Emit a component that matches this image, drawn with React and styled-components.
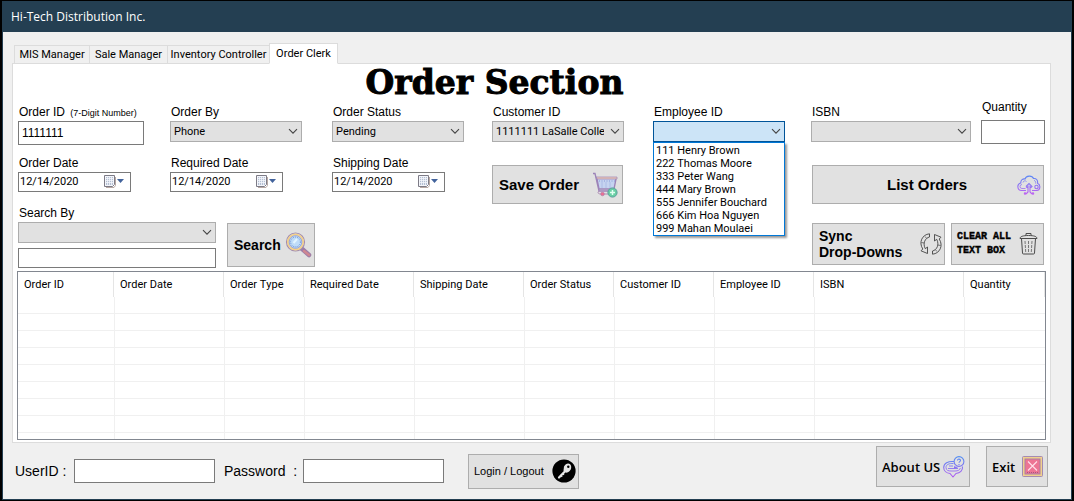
import React from "react";
import styled, { createGlobalStyle, css } from "styled-components";

const Global = createGlobalStyle`
  *, *::before, *::after { box-sizing: border-box; }
  body { margin: 0; background: #000; color: #000; font: 11px/14px Roboto, "Liberation Sans", Arial, sans-serif; font-kerning: none; }
  button, input, select { font: inherit; font-kerning: inherit; color: inherit; margin: 0; border-radius: 0; }
`;

const wide = `"Liberation Sans", Arial, sans-serif`;

const Window = styled.div`
  margin: 1px 2px;
  border: 1px solid #243f52;
  border-top: 0;
  background: #f0f0f0;
`;

const TitleBar = styled.header`
  height: 31px;
  padding-left: 8px;
  background: #243f52;
  color: #fff;
  font: 12px/31px "Open Sans", "Noto Sans", sans-serif;
`;

const Tabs = styled.nav`
  display: flex;
  align-items: flex-end;
  height: 32px;
  margin-bottom: -1px;
  padding-left: 11px;
`;

const Tab = styled.button`
  position: relative;
  flex: none;
  width: ${(p) => p.$width}px;
  height: 19px;
  padding: 0;
  border: 1px solid #dcdcdc;
  border-right-width: 0;
  background: #f0f0f0;
  text-align: center;
  white-space: nowrap;
  ${(p) =>
    p.$active &&
    css`
      height: 21px;
      border-right-width: 1px;
      border-bottom-color: #fff;
      background: #fff;
    `}
`;

const Panel = styled.main`
  margin: 0 20px 0 9px;
  padding: 0 4px 2px;
  border: 1px solid #dcdcdc;
  background: #fff;
`;

const Heading = styled.h1`
  margin: 0;
  padding: 4px 74px 0 0;
  height: 34px;
  font: bold 33px/30px "DejaVu Serif", serif;
  text-align: center;
  -webkit-text-stroke: 1px #000;
`;

const FormRow = styled.div`
  display: grid;
  grid-template-columns: 152fr 162fr 160fr 161fr 158fr 170fr 64fr;
  height: ${(p) => p.$height}px;
  margin: 0 1px 0 1px;
`;

const Field = styled.div`
  position: relative;
  display: flex;
  flex-direction: column;
  min-width: 0;
  margin-right: ${(p) => p.$after || 0}px;
  padding-top: ${(p) => (p.$raised ? 0 : p.$top || 0)}px;
  gap: ${(p) => (p.$raised ? 4 : 0)}px;
`;

const Label = styled.label`
  height: 18px;
  padding-left: 1px;
  font: 12px/18px ${wide};
  white-space: nowrap;
`;

const Hint = styled.span`
  margin-left: 2px;
  font-size: 9px;
`;

const TextBox = styled.input`
  width: 100%;
  height: ${(p) => p.$height || 24}px;
  padding: 0 3px;
  border: 1px solid #7a7a7a;
  background: #fff;
  font: 12px ${wide};
  outline: 0;
`;

const SelectWrap = styled.div`
  position: relative;
  svg {
    position: absolute;
    right: 4px;
    top: 7px;
    pointer-events: none;
  }
`;

const SelectBox = styled.select`
  appearance: none;
  display: block;
  width: 100%;
  height: 21px;
  padding: 0 19px 0 3px;
  border: 1px solid ${(p) => (p.$open ? "#005499" : "#adadad")};
  background: ${(p) => (p.$open ? "#cce4f7" : "#e1e1e1")};
  outline: 0;
`;

const Options = styled.ul`
  position: absolute;
  z-index: 2;
  top: 100%;
  left: 0;
  right: 0;
  margin: 0;
  padding: 1px 2px 0;
  border: 1px solid #0078d7;
  background: #fff;
  box-shadow: 2px 2px 2px rgba(0, 0, 0, 0.4);
  list-style: none;
  line-height: 13px;
  white-space: nowrap;
`;

const DateBox = styled.div`
  display: flex;
  align-items: center;
  width: 113px;
  height: 20px;
  padding: 0 5px 0 1px;
  border: 1px solid #7a7a7a;
  background: #fff;
`;

const DateInput = styled.input`
  flex: 1;
  min-width: 0;
  padding: 0;
  border: 0;
  outline: 0;
  background: none;
`;

const PickerButton = styled.button`
  display: flex;
  padding: 0;
  border: 0;
  background: none;
`;

const Button = styled.button`
  display: flex;
  align-items: center;
  justify-content: space-between;
  flex: none;
  width: ${(p) => (p.$width ? p.$width + "px" : "auto")};
  height: ${(p) => p.$height}px;
  padding: 0 2px 0 6px;
  border: 1px solid #adadad;
  background: #e1e1e1;
  font: bold 14px/16px ${wide};
  text-align: left;
  white-space: nowrap;
  svg { flex: none; }
`;

const SaveButton = styled(Button)`
  align-self: end;
  margin-right: 30px;
  font-size: 15px;
`;

const ListButton = styled(Button)`
  grid-column: 6 / 8;
  align-self: end;
  margin-left: 1px;
  margin-right: 1px;
  font-size: 15px;
`;

const Centered = styled.span`
  flex: 1;
  padding-left: 18px;
  text-align: center;
`;

const ClearButton = styled(Button)`
  padding: 0 5px;
  font: bold 10px/14px "Liberation Mono", monospace;
  -webkit-text-stroke: 0.4px #000;
`;

const LoginButton = styled(Button)`
  margin-left: 24px;
  padding-left: 5px;
  font-size: 11px;
  font-weight: normal;
`;

const UiButton = styled(Button)`
  padding: 0 4px 0 5px;
  font: 600 13px/18px "Open Sans", "Noto Sans", sans-serif;
`;

const SearchRow = styled.div`
  display: flex;
  align-items: flex-start;
  height: 67px;
  margin: 0 2px 0 1px;
`;

const SearchFields = styled.div`
  display: flex;
  flex-direction: column;
  width: 198px;
  margin-right: 11px;
`;

const SearchText = styled(TextBox)`
  margin-top: 5px;
`;

const Actions = styled.div`
  display: flex;
  gap: ${(p) => p.$gap}px;
  margin-left: auto;
  padding-top: ${(p) => p.$top}px;
`;

const SearchAction = styled.div`
  padding-top: 19px;
`;

const Grid = styled.div`
  height: 169px;
  overflow: hidden;
  border: 1px solid #828790;
`;

const Table = styled.table`
  width: 100%;
  table-layout: fixed;
  border-collapse: separate;
  border-spacing: 0;
  th {
    height: 25px;
    padding: 0 0 0 6px;
    border-right: 1px solid #e5e5e5;
    font-weight: normal;
    text-align: left;
    white-space: nowrap;
  }
  td {
    height: 17px;
    padding: 0;
    border-bottom: 1px solid #f0f0f0;
  }
  td + td { border-left: 1px solid #f0f0f0; }
`;

const Footer = styled.footer`
  display: flex;
  align-items: center;
  height: 56px;
  padding: 0 23px 0 12px;
`;

const LoginLabel = styled.label`
  width: ${(p) => p.$width}px;
  font: 14px/18px ${wide};
  white-space: pre;
`;

const LoginInput = styled(TextBox)`
  width: 141px;
  margin-right: ${(p) => p.$after || 0}px;
`;

const FooterActions = styled(Actions)`
  align-self: flex-start;
`;

const Chevron = () => (
  <svg width="10" height="7" viewBox="0 0 10 7" fill="none" stroke="#444" strokeWidth="1.1">
    <path d="M1 1.2 5 5.2 9 1.2" />
  </svg>
);

const CalendarIcon = () => (
  <svg width="21" height="14" viewBox="0 0 21 14">
    <path d="M2 12.500h8l1.500-2V2" stroke="#b8a9a4" fill="none" />
    <path d="M.5.5h10v9l-2 2h-8z" fill="#f4f6fb" stroke="#7d7b86" />
    <path d="M2 2h7v8H2z" fill="#b4bfd3" />
    <path d="M2 3.500h7M2 5.500h7M2 7.500h7M3.500 2v8M5.500 2v8M7.500 2v8" stroke="#f4f6fb" strokeWidth=".8" />
    <path d="M13 4h7l-3.500 4z" fill="#42639c" />
  </svg>
);

const CartIcon = () => (
  <svg width="28" height="26" viewBox="0 0 28 26" fill="none">
    <path d="M5 7h19l-2 9.500H7z" fill="#c5d3f0" />
    <path d="M4 5h21v2H5z" fill="#f0ccb4" stroke="#a48bb8" strokeWidth=".8" />
    <path d="M1 1.500h2L7 19h14M5 7l2 10h15l2-10" stroke="#9c83b8" strokeWidth="1.3" />
    <path d="M7 9h16" stroke="#8597d6" strokeDasharray="1 1.500" />
    <path d="M10 10v6M14 10v6M18 10v6" stroke="#adbce6" />
    <path d="M7 19c-2 2-.5 3 2 3h10" stroke="#ae8ab4" />
    <circle cx="10.500" cy="22" r="1.800" fill="#ee6f91" stroke="#a879a8" strokeWidth=".6" />
    <circle cx="20.500" cy="20.500" r="4.600" fill="#69cfa4" stroke="#5b9e9b" />
    <path d="M20.500 18v5M18 20.500h5" stroke="#e1fff2" strokeWidth="1.500" />
  </svg>
);

const CloudIcon = () => (
  <svg width="24" height="20" viewBox="0 0 24 20" fill="none" stroke="url(#cloudInk)" strokeWidth="1.100">
    <defs>
      <linearGradient id="cloudInk" x1="0" y1="0" x2="0" y2="20" gradientUnits="userSpaceOnUse">
        <stop stopColor="#5589f5" />
        <stop offset="1" stopColor="#c260f1" />
      </linearGradient>
    </defs>
    <path d="M9 15.500H4.500a3.800 3.800 0 0 1-.7-7.500C3.500 5 6 3.500 8 4c1-3.500 7-4 8.500-.5 3-.3 4.600 2 4 4.700 3.500 1.400 3 7-.7 7.300H15" />
    <path d="M8.500 13.500H5a2 2 0 0 1 0-4M6 7.500c.5-2 2.500-2 3.500-1M17 5.500c1.500.3 2 1.500 1.500 3" strokeWidth=".8" />
    <path d="M9 11.500 12 8.500l3 3-1 1-1-1V17l2 2M9 11.500l1 1 1-1V17l-2 2" />
    <circle cx="19.500" cy="12" r="1.700" />
    <circle cx="8" cy="18.500" r=".7" />
    <circle cx="16" cy="18.500" r=".7" />
  </svg>
);

const SearchIcon = () => (
  <svg width="27" height="26" viewBox="0 0 27 26" fill="none">
    <path d="m16 16 8 7" stroke="#9c7da8" strokeWidth="4.500" strokeLinecap="round" />
    <path d="m19 19 5 4" stroke="#cf8791" strokeWidth="2.500" strokeLinecap="round" />
    <circle cx="10.500" cy="10" r="9" fill="#bfdcf8" stroke="#a38caf" strokeWidth="1.200" />
    <circle cx="10.500" cy="10" r="7.700" stroke="#f5d087" strokeWidth="1.700" />
    <circle cx="10.500" cy="10" r="6.300" stroke="#8a91cc" strokeWidth=".7" />
    <circle cx="10.500" cy="10" r="4.900" stroke="#628ed4" strokeWidth="1" strokeDasharray="1 1.200" />
    <path d="M8.500 11 12 7" stroke="#e3f5ff" strokeWidth="2" />
  </svg>
);

const SyncIcon = () => (
  <svg width="22" height="22" viewBox="0 0 22 22" fill="none" stroke="#444" strokeWidth=".9">
    <path d="M9.500.8C2 1.500-1.500 9.500 2.800 16L1 17.800l6.500 2.700V14l-2.200 1.700C2.500 10.500 5 5 9.500 4z" />
    <path d="M12.500 21.200c7.500-.7 11-8.700 6.700-15.200L21 4.200l-6.500-2.700V8l2.200-1.700C19.500 11.500 17 17 12.500 18z" />
    <path d="m5 3.500 1.800 2M1.500 9.500l2.500.5M17 18.500l-1.800-2M20.500 12.500 18 12" strokeWidth=".7" />
  </svg>
);

const TrashIcon = () => (
  <svg width="19" height="22" viewBox="0 0 19 22" fill="none" stroke="#4b4b4b">
    <path d="M7 2.500v-2h5v2" />
    <path d="M1 5.500c0-2 3-3 8.500-3s8.500 1 8.500 3z" />
    <path d="m2.500 5.500 1 14.500q0 1 1 1h10q1 0 1-1l1-14.500" />
    <path d="m6 8 .7 11M9.500 8v11M13 8l-.7 11" strokeDasharray="3 1" strokeWidth=".7" />
  </svg>
);

const KeyIcon = () => (
  <svg width="24" height="24" viewBox="0 0 24 24">
    <circle cx="12" cy="12" r="11.600" fill="#000" />
    <path d="m12.600 12.800-5.600 5.700" stroke="#e5e5e5" strokeWidth="2.200" strokeLinecap="round" />
    <path d="m8.500 16 1.700 1.700M10.300 14.200l1.700 1.700" stroke="#e5e5e5" strokeWidth="1.300" />
    <path d="M12 7.500c2-3.700 6-3.800 7-.7 1 3.200-1.500 6.600-5 7l-2.500-2z" fill="#e5e5e5" />
    <circle cx="16.300" cy="7.800" r="1.200" fill="#000" />
  </svg>
);

const AboutIcon = () => (
  <svg width="22" height="22" viewBox="0 0 22 22" fill="none" stroke="url(#aboutInk)" strokeWidth="1.100">
    <defs>
      <linearGradient id="aboutInk" x1="0" y1="0" x2="0" y2="22" gradientUnits="userSpaceOnUse">
        <stop stopColor="#4f8ff3" />
        <stop offset="1" stopColor="#b65af0" />
      </linearGradient>
    </defs>
    <circle cx="16" cy="5.500" r="4.900" />
    <path d="M14.500 4.500c0-2 3-1.700 3 0 0 1.200-1.500 1-1.500 2.300M16 8v1M12 10l-.5 2 3-1" />
    <path d="M11 5.500C5 5 .7 7.300.7 11.500c0 3.500 3 5.700 6.300 6l3 3.500 3-3.500c4-.3 7-3 6.500-7" />
    <path d="M10.500 7.500C6 7.300 3 8.500 3 11.500s2.500 3.500 5 3.500h4c3 0 5-1 5.300-3M6 10h4M5 12.500h10" strokeWidth=".9" />
  </svg>
);

const ExitIcon = () => (
  <svg width="21" height="21" viewBox="0 0 21 21" fill="none">
    <rect x=".5" y=".5" width="20" height="20" rx="1" fill="#f1d08d" stroke="#a48bb2" />
    <rect x="3" y="3" width="15" height="15" fill="#ed7494" stroke="#a780a4" />
    <path d="m6 5.500 9 9M15 5.500l-9 9" stroke="#ffe0ea" strokeWidth="1.100" />
    <path d="M5 16.500h11" stroke="#a75682" strokeDasharray="1 1" />
  </svg>
);

function Select({ id, label, value, after, top = 5, open, children }) {
  return (
    <Field $after={after} $top={top}>
      <Label htmlFor={id}>{label}</Label>
      <SelectWrap>
        <SelectBox id={id} $open={open} defaultValue={value}>
          <option>{value}</option>
        </SelectBox>
        <Chevron />
        {children}
      </SelectWrap>
    </Field>
  );
}

function DateField({ id, label }) {
  return (
    <Field>
      <Label htmlFor={id}>{label}</Label>
      <DateBox>
        <DateInput id={id} defaultValue="12/14/2020" />
        <PickerButton type="button" aria-label={"Pick " + label}>
          <CalendarIcon />
        </PickerButton>
      </DateBox>
    </Field>
  );
}

const employees = [
  "111 Henry Brown",
  "222 Thomas Moore",
  "333 Peter Wang",
  "444 Mary Brown",
  "555 Jennifer Bouchard",
  "666 Kim Hoa Nguyen",
  "999 Mahan Moulaei",
];

const columns = [
  ["Order ID", "96px"],
  ["Order Date", "110px"],
  ["Order Type", "80px"],
  ["Required Date", "110px"],
  ["Shipping Date", "110px"],
  ["Order Status", "90px"],
  ["Customer ID", "100px"],
  ["Employee ID", "100px"],
  ["ISBN", "150px"],
  ["Quantity", "auto"],
];

const Col = styled.col`
  width: ${(p) => p.$width};
`;

export default function App() {
  return (
    <>
      <Global />
      <Window>
        <TitleBar>Hi-Tech Distribution Inc.</TitleBar>
        <Tabs role="tablist">
          <Tab role="tab" $width={75}>MIS Manager</Tab>
          <Tab role="tab" $width={78}>Sale Manager</Tab>
          <Tab role="tab" $width={102}>Inventory Controller</Tab>
          <Tab role="tab" $width={69} $active aria-selected="true">Order Clerk</Tab>
        </Tabs>
        <Panel>
          <Heading>Order Section</Heading>
          <FormRow $height={56}>
            <Field $after={26} $top={5}>
              <Label htmlFor="orderId">
                Order ID <Hint>(7-Digit Number)</Hint>
              </Label>
              <TextBox id="orderId" defaultValue="1111111" />
            </Field>
            <Select id="orderBy" label="Order By" value="Phone" after={30} />
            <Select id="status" label="Order Status" value="Pending" after={28} />
            <Select id="customer" label="Customer ID" value="1111111 LaSalle College" after={29} />
            <Select id="employee" label="Employee ID" value="" after={26} open>
              <Options role="listbox" aria-label="Employees">
                {employees.map((name) => (
                  <li key={name} role="option" aria-selected="false">{name}</li>
                ))}
              </Options>
            </Select>
            <Select id="isbn" label="ISBN" value="" after={10} />
            <Field $raised>
              <Label htmlFor="quantity">Quantity</Label>
              <TextBox id="quantity" />
            </Field>
          </FormRow>
          <FormRow $height={50}>
            <DateField id="orderDate" label="Order Date" />
            <DateField id="requiredDate" label="Required Date" />
            <DateField id="shippingDate" label="Shipping Date" />
            <SaveButton type="button" $height={39}>
              Save Order
              <CartIcon />
            </SaveButton>
            <span />
            <ListButton type="button" $height={39}>
              <Centered>List Orders</Centered>
              <CloudIcon />
            </ListButton>
          </FormRow>
          <SearchRow>
            <SearchFields>
              <Select id="searchBy" label="Search By" value="" top={0} />
              <SearchText aria-label="Search text" $height={20} />
            </SearchFields>
            <SearchAction>
              <Button type="button" $width={88} $height={44}>
                Search
                <SearchIcon />
              </Button>
            </SearchAction>
            <Actions $gap={6} $top={19}>
              <Button type="button" $width={133} $height={42}>
                <span>Sync<br />Drop-Downs</span>
                <SyncIcon />
              </Button>
              <ClearButton type="button" $width={93} $height={42}>
                <span>CLEAR ALL<br />TEXT BOX</span>
                <TrashIcon />
              </ClearButton>
            </Actions>
          </SearchRow>
          <Grid>
            <Table>
              <colgroup>
                {columns.map(([name, width]) => <Col key={name} $width={width} />)}
              </colgroup>
              <thead>
                <tr>{columns.map(([name]) => <th key={name} scope="col">{name}</th>)}</tr>
              </thead>
              <tbody>
                {Array.from({ length: 9 }, (_, row) => (
                  <tr key={row}>{columns.map(([name]) => <td key={name} />)}</tr>
                ))}
              </tbody>
            </Table>
          </Grid>
        </Panel>
        <Footer>
          <LoginLabel htmlFor="userId" $width={59}>UserID :</LoginLabel>
          <LoginInput id="userId" $after={9} />
          <LoginLabel htmlFor="password" $width={79}>{"Password  :"}</LoginLabel>
          <LoginInput id="password" type="password" />
          <LoginButton type="button" $width={111} $height={35}>
            Login / Logout
            <KeyIcon />
          </LoginButton>
          <FooterActions $gap={16} $top={3}>
            <UiButton type="button" $width={94} $height={41}>
              About US
              <AboutIcon />
            </UiButton>
            <UiButton type="button" $width={62} $height={41}>
              Exit
              <ExitIcon />
            </UiButton>
          </FooterActions>
        </Footer>
      </Window>
    </>
  );
}
